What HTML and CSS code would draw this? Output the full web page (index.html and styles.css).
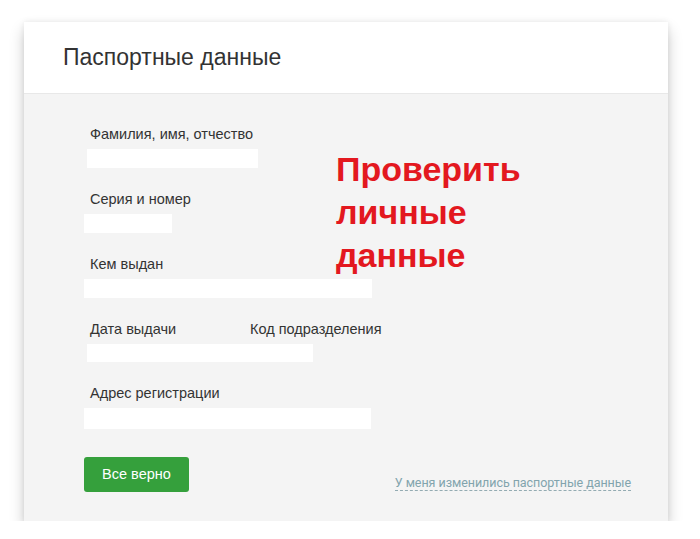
FILE: index.html
```html
<!DOCTYPE html>
<html lang="ru">
<head>
<meta charset="utf-8">
<title>Паспортные данные</title>
<link rel="stylesheet" href="styles.css">
</head>
<body>
<div class="card">
  <div class="card-header">
    <h1 class="title">Паспортные данные</h1>
  </div>
  <div class="card-body">
    <div class="content">
      <div class="form">
        <div class="field">
          <div class="label">Фамилия, имя, отчество</div>
          <div class="input input-fio"></div>
        </div>
        <div class="field">
          <div class="label">Серия и номер</div>
          <div class="input input-series"></div>
        </div>
        <div class="field">
          <div class="label">Кем выдан</div>
          <div class="input input-issuer"></div>
        </div>
        <div class="field">
          <div class="label label-pair"><span class="label-date">Дата выдачи</span><span class="label-code">Код подразделения</span></div>
          <div class="input input-date"></div>
        </div>
        <div class="field">
          <div class="label">Адрес регистрации</div>
          <div class="input input-address"></div>
        </div>
      </div>
      <div class="notice">Проверить<br>личные<br>данные</div>
    </div>
    <div class="actions">
      <button class="btn">Все верно</button>
      <a class="link" href="#">У меня изменились паспортные данные</a>
    </div>
  </div>
</div>
</body>
</html>
```
FILE: styles.css
```css
html, body {
  margin: 0;
  padding: 0;
  background: #ffffff;
}
body {
  padding: 22px 0 0 24px;
  font-family: "Liberation Sans", Arial, sans-serif;
  color: #333333;
}
.card {
  width: 644px;
  background: #f4f4f4;
  box-shadow: 0 8px 14px rgba(0, 0, 0, 0.2), 0 0 6px rgba(0, 0, 0, 0.08);
}
.card-header {
  height: 72px;
  background: #ffffff;
  border-bottom: 1px solid #e8e8e8;
  box-sizing: border-box;
  display: flex;
  align-items: center;
  padding-left: 39px;
}
.title {
  margin: 0;
  font-weight: normal;
  font-size: 23px;
  color: #333333;
}
.card-body {
  padding: 32px 37px 29px 60px;
}
.content {
  display: flex;
}
.form {
  width: 290px;
  flex-shrink: 0;
  display: flex;
  flex-direction: column;
}
.field {
  margin-bottom: 23px;
}
.label {
  font-size: 14.5px;
  line-height: 16px;
  margin-left: 6px;
  margin-bottom: 7px;
  color: #333;
  white-space: nowrap;
}
.label-pair {
  display: flex;
}
.label-date {
  width: 160px;
  flex-shrink: 0;
}
.label-code {
  flex-shrink: 0;
}
.input {
  background: #ffffff;
  height: 19px;
}
.input-fio { width: 171px; margin-left: 3px; }
.input-series { width: 88px; }
.input-issuer { width: 288px; }
.input-date { width: 226px; margin-left: 3px; height: 18px; }
.input-address { width: 287px; height: 21px; }
.notice {
  margin-left: -38px;
  margin-top: 22px;
  font-size: 34px;
  line-height: 43px;
  font-weight: bold;
  color: #e3181f;
  white-space: nowrap;
}
.actions {
  display: flex;
  justify-content: space-between;
  align-items: flex-end;
  margin-top: 5px;
}
.btn {
  width: 105px;
  height: 35px;
  border: none;
  border-radius: 3px;
  background: #35a03c;
  color: #ffffff;
  font-family: "Liberation Sans", Arial, sans-serif;
  font-size: 14.5px;
  padding: 0 0 2px 0;
}
.link {
  font-family: Roboto, "Liberation Sans", sans-serif;
  font-size: 12.5px;
  letter-spacing: -0.05px;
  color: #82a4ad;
  text-decoration: none;
  border-bottom: 1px dashed #93abb2;
  line-height: 15px;
  margin-bottom: 1px;
}
```
